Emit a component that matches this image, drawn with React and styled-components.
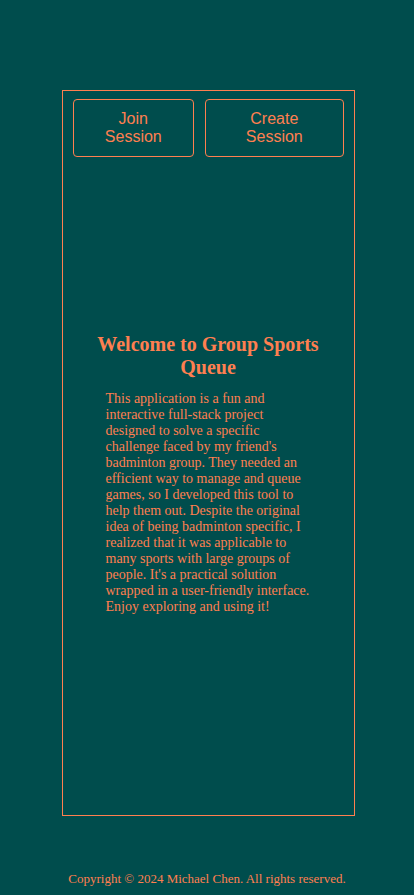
import React from "react";
import styled, { createGlobalStyle } from "styled-components";

const Global = createGlobalStyle`
  html, body { margin: 0; padding: 0; background: #004d4d; }
  * { box-sizing: border-box; }
`;

const Page = styled.div`
  min-height: 100vh;
  display: flex;
  flex-direction: column;
  align-items: center;
  padding-top: 90px;
  color: #ff7f50;
  font-family: "Liberation Serif", "Times New Roman", serif;
`;

const Panel = styled.main`
  width: 293px;
  height: 726px;
  margin-left: 2px;
  border: 1px solid #ff7f50;
  padding: 8px 10px;
  display: flex;
  flex-direction: column;
`;

const ButtonRow = styled.div`
  display: flex;
  gap: 11px;
`;

const ActionButton = styled.button`
  width: ${(p) => p.$w}px;
  height: 58px;
  padding: 0 20px;
  background: transparent;
  border: 1px solid #ff7f50;
  border-radius: 4px;
  color: #ff7f50;
  font-family: "Liberation Sans", Arial, sans-serif;
  font-size: 16px;
  line-height: 18px;
  text-align: center;
  cursor: pointer;
`;

const Welcome = styled.section`
  flex: 1;
  display: flex;
  flex-direction: column;
  justify-content: center;
  align-items: center;
  padding-bottom: 16px;
`;

const Title = styled.h2`
  width: 240px;
  margin: 0 0 12px;
  font-size: 20px;
  line-height: 23px;
  font-weight: bold;
  text-align: center;
`;

const Intro = styled.p`
  width: 207px;
  margin: 0 0 0 2px;
  font-size: 14px;
  line-height: 16px;
  text-align: left;
`;

const Footer = styled.footer`
  margin-top: auto;
  padding-bottom: 9px;
  font-size: 13px;
  line-height: 15px;
  text-align: center;
`;

export default function App() {
  return (
    <>
      <Global />
      <Page>
        <Panel>
          <ButtonRow>
            <ActionButton $w={122}>Join Session</ActionButton>
            <ActionButton $w={139}>Create Session</ActionButton>
          </ButtonRow>
          <Welcome>
            <Title>Welcome to Group Sports Queue</Title>
            <Intro>
              This application is a fun and interactive full-stack project
              designed to solve a specific challenge faced by my friend's
              badminton group. They needed an efficient way to manage and queue
              games, so I developed this tool to help them out. Despite the
              original idea of being badminton specific, I realized that it was
              applicable to many sports with large groups of people. It's a
              practical solution wrapped in a user-friendly interface. Enjoy
              exploring and using it!
            </Intro>
          </Welcome>
        </Panel>
        <Footer>Copyright © 2024 Michael Chen. All rights reserved.</Footer>
      </Page>
    </>
  );
}
